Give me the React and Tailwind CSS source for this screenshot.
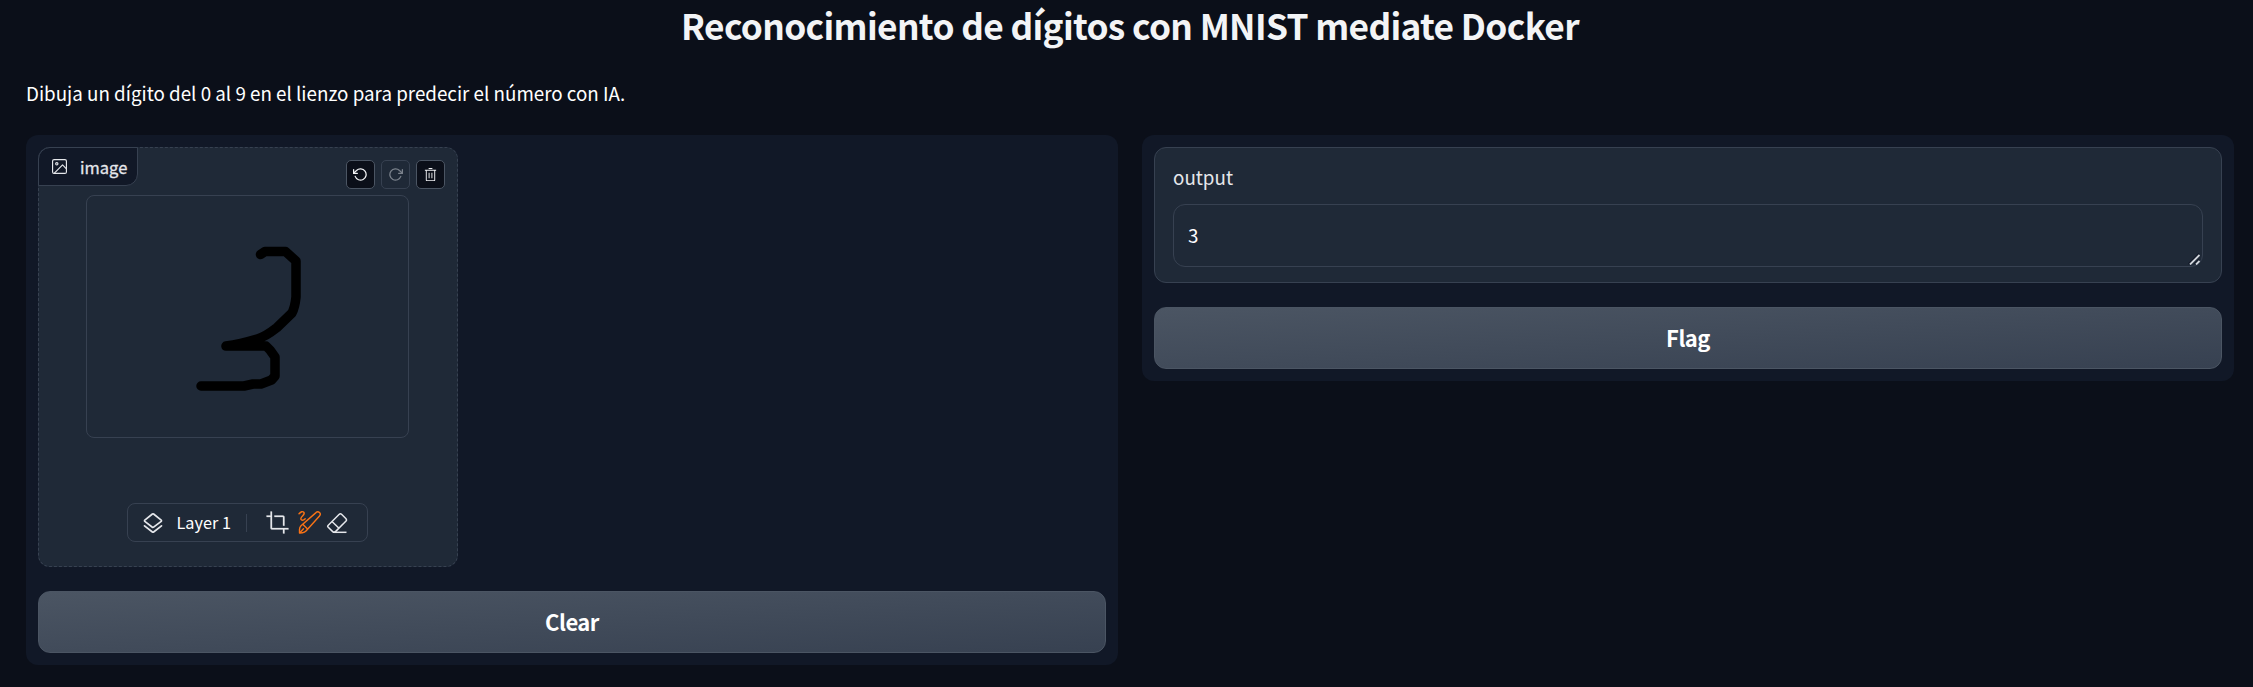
import React from "react";

const actionButton = "flex h-[29px] w-[29px] items-center justify-center rounded-[5px] border";
const bigButton =
  "flex h-[62px] w-full items-center justify-center rounded-xl border border-[#4b5563] bg-[linear-gradient(to_bottom_right,#4b5563,#374151)] pb-[2px] text-[22px] tracking-[-0.5px] font-bold text-white";

function ImageIcon() {
  return (
    <svg className="h-[15px] w-[15px]" viewBox="2.25 2.25 19.5 19.5" fill="none" stroke="currentColor" strokeWidth="1.5" strokeLinecap="round" strokeLinejoin="round">
      <rect x="3" y="3" width="18" height="18" rx="2" />
      <circle cx="8.5" cy="8.5" r="1.5" />
      <path d="M21 15l-5-5L5 21" />
    </svg>
  );
}

function UndoIcon() {
  return (
    <svg className="h-[15px] w-[15px]" viewBox="0 0 24 24" fill="none" stroke="currentColor" strokeWidth="2" strokeLinecap="round" strokeLinejoin="round">
      <polyline points="1 4 1 10 7 10" />
      <path d="M3.51 15a9 9 0 1 0 2.13-9.36L1 10" />
    </svg>
  );
}

function RedoIcon() {
  return (
    <svg className="h-[15px] w-[15px]" viewBox="0 0 24 24" fill="none" stroke="currentColor" strokeWidth="2" strokeLinecap="round" strokeLinejoin="round">
      <polyline points="23 4 23 10 17 10" />
      <path d="M20.49 15a9 9 0 1 1-2.12-9.36L23 10" />
    </svg>
  );
}

function TrashIcon() {
  return (
    <svg className="h-[15px] w-[15px]" viewBox="0 0 32 32" fill="currentColor">
      <path d="M12 12h2v12h-2zm6 0h2v12h-2z" />
      <path d="M4 6v2h2v20a2 2 0 0 0 2 2h16a2 2 0 0 0 2-2V8h2V6zm4 22V8h16v20zm4-26h8v2h-8z" />
    </svg>
  );
}

function LayersIcon() {
  return (
    <svg className="h-[24px] w-[24px]" viewBox="0 0 24 24" fill="none" stroke="currentColor" strokeWidth="1.7" strokeLinecap="round" strokeLinejoin="round">
      <path d="M11.400 3a1 1 0 0 1 1.200 0L20.200 9.100a.8.8 0 0 1 0 1.200L12.600 16.200a1 1 0 0 1-1.200 0L3.800 10.300a.8.8 0 0 1 0-1.200Z" />
      <path d="M3.500 14.800 11.400 21a1 1 0 0 0 1.200 0l7.900-6.200" />
    </svg>
  );
}

function CropIcon() {
  return (
    <svg className="h-[25px] w-[25px]" viewBox="0 0 32 32" fill="currentColor" stroke="currentColor" strokeWidth=".3">
      <path d="M25 20h-2V9H12V7h11a2 2 0 0 1 2 2Z" />
      <path d="M9 23V2H7v5H2v2h5v14a2 2 0 0 0 2 2h14v5h2v-5h5v-2Z" />
    </svg>
  );
}

function BrushIcon() {
  return (
    <svg className="h-[25px] w-[25px]" viewBox="0 0 25 25" fill="none" stroke="currentColor" strokeWidth="1.400" strokeLinecap="round" strokeLinejoin="round">
      <path d="M2.500 23V19.500Q2.500 17.300 4 15.800L19 2.600A2.400 2.400 0 0 1 22.500 6L9 21Q7.600 22.500 5.500 22.700Z" />
      <path d="M6 14.500 10.300 18.800M3 22.500 6.500 18.800" />
      <path d="M2 3.800Q5 .5 6.800 2.200 8 3.800 5.500 6 2.800 8.600 4.500 10 6 11 8.200 8.800" />
    </svg>
  );
}

function EraserIcon() {
  return (
    <svg className="h-[22px] w-[22px]" viewBox="0 0 22 22" fill="none" stroke="currentColor" strokeWidth="1.500" strokeLinejoin="round">
      <path d="M8 20.300H20.500" />
      <path d="M2 13.500 13 2.500a2 2 0 0 1 2.800 0l4 4a2 2 0 0 1 0 2.800L9.500 19.600a2 2 0 0 1-2.800 0L2 15a1 1 0 0 1 0-1.500Z" />
      <path d="M6 9.500 13 16.300" />
    </svg>
  );
}

function Sketchpad() {
  return (
    <div className="relative flex h-[420px] w-[420px] flex-col items-center rounded-xl border border-dashed border-[#374151] bg-[#1f2937] pr-[2px] pt-[47px]">
      <div className="absolute -left-px -top-px flex h-[39px] w-[100px] items-center gap-[13px] rounded-tl-xl rounded-br-xl border border-[#374151] bg-[#111827] pl-[13px] text-[#e5e7eb]">
        <ImageIcon />
        <span className="pt-px text-[16.500px] [-webkit-text-stroke:0.3px_#e5e7eb]">image</span>
      </div>
      <div className="absolute right-[12px] top-[12px] flex gap-[6px]">
        <div className={`${actionButton} border-[#4b5563] bg-[#0b0f19] text-[#f3f4f6]`}><UndoIcon /></div>
        <div className={`${actionButton} border-[#374151] text-[#7b828c]`}><RedoIcon /></div>
        <div className={`${actionButton} border-[#4b5563] bg-[#0b0f19] text-[#f3f4f6]`}><TrashIcon /></div>
      </div>
      <div className="h-[243px] w-[323px] rounded-lg border border-[#374151]">
        <svg className="h-full w-full" viewBox="87 196 321 241" fill="none" stroke="#000" strokeWidth="9.500" strokeLinecap="round" strokeLinejoin="round">
          <path d="M260.500 254.500 265 251.500H285.500L296 261V297Q295 307 292 313L277 327.500Q265 337 257 339Q240 344 226 346H266L270 350 275 357V376L271.500 380 261 384H253L244 386H201" />
        </svg>
      </div>
      <div className="mt-[65px] flex h-[39px] w-[241px] items-center rounded-lg border border-[#374151] text-[#e5e7eb]">
        <span className="ml-[13px]"><LayersIcon /></span>
        <span className="ml-[12px] w-[55px] whitespace-nowrap text-[16.300px] text-white">Layer 1</span>
        <span className="ml-[14px] h-[18px] w-px bg-[#374151]" />
        <span className="ml-[18px]"><CropIcon /></span>
        <span className="ml-[7px] text-[#f97316]"><BrushIcon /></span>
        <span className="ml-[4px]"><EraserIcon /></span>
      </div>
    </div>
  );
}

export default function App() {
  return (
    <div className="h-[687px] bg-[#0b0f19] pl-[26px] pr-[19px] font-['Noto_Sans_CJK_SC','Noto_Sans',sans-serif] text-white">
      <h1 className="flex h-[54px] items-center justify-center pb-[4px] text-[35.300px] tracking-[-0.66px] font-bold text-[#f3f4f6]">Reconocimiento de dígitos con MNIST mediate Docker</h1>
      <p className="flex h-[81px] items-center pb-[2px] text-[18.800px]">Dibuja un dígito del 0 al 9 en el lienzo para predecir el número con IA.</p>
      <main className="grid grid-cols-2 items-start gap-6">
        <section className="flex flex-col gap-6 rounded-xl bg-[#111827] p-3">
          <Sketchpad />
          <button className={bigButton}>Clear</button>
        </section>
        <section className="flex flex-col gap-6 rounded-xl bg-[#111827] p-3">
          <div className="flex h-[136px] flex-col rounded-xl border border-[#374151] bg-[#1f2937] px-[18px]">
            <label className="mt-[14px] h-[30px] text-[18.800px] leading-[30px] text-[#e5e7eb]">output</label>
            <div className="relative mt-[12px] flex h-[63px] items-center rounded-xl border border-[#374151] pb-px pl-[14px] text-[18.800px]">
              3
              <svg className="absolute bottom-[1px] right-[2px] h-[12px] w-[12px]" viewBox="0 0 12 12" fill="none">
                <path d="M.5 11 11 .5M6.500 11 11 6.500" stroke="#111827" strokeWidth="1.500" />
                <path d="M2 11.500 11.500 2M8 11.500 11.500 8" stroke="#d1d5db" strokeWidth="1.800" />
              </svg>
            </div>
          </div>
          <button className={bigButton}>Flag</button>
        </section>
      </main>
    </div>
  );
}
